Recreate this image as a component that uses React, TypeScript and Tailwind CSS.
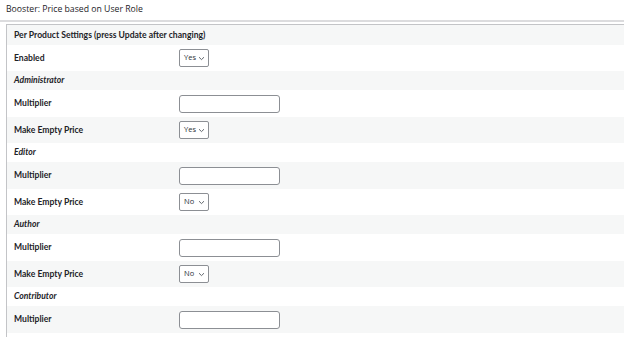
import React from "react";

const font = { fontFamily: '"Open Sans", "Noto Sans", sans-serif' };
const labelFont = { fontFamily: 'Lato, "Open Sans", sans-serif' };

function Select({ value }: { value: string }) {
  return (
    <div className="flex h-[18px] w-[30px] items-center justify-between rounded-[2px] border border-[#8c8f94] bg-white pl-[4px] pr-[3px] text-[7.5px] text-[#2c3338]">
      <span>{value}</span>
      <svg width="7" height="5" viewBox="0 0 7 5" fill="none">
        <path d="M1 1.2 L3.5 3.6 L6 1.2" stroke="#50575e" strokeWidth="0.9" />
      </svg>
    </div>
  );
}

function Input() {
  return <div className="h-[18px] w-[101px] rounded-[3px] border border-[#8c8f94] bg-white" />;
}

function Row({
  label,
  h,
  gray,
  italic,
  children,
}: {
  label: string;
  h: string;
  gray?: boolean;
  italic?: boolean;
  children?: React.ReactNode;
}) {
  return (
    <div className={`flex items-center ${h} ${gray ? "bg-[#f6f7f7]" : "bg-white"}`}>
      <div
        style={labelFont}
        className={`w-[172px] shrink-0 whitespace-nowrap pl-[7px] text-[8.6px] font-bold text-[#1d2327] ${italic ? "italic" : ""}`}
      >
        {label}
      </div>
      {children}
    </div>
  );
}

export default function App() {
  return (
    <div className="h-[337px] w-[624px] overflow-hidden bg-white" style={font}>
      <div className="flex h-[20px] items-center whitespace-nowrap pl-[6px] text-[8.7px] text-[#1d2327]">
        Booster: Price based on User Role
      </div>
      <div className="h-[2px] bg-[#dcdcde]" />
      <div className="h-[2px]" />
      <div className="ml-[6px] border-l border-t border-[#c3c4c7]">
        <Row label="Per Product Settings (press Update after changing)" h="h-[20px]" gray />
        <Row label="Enabled" h="h-[26px]">
          <Select value="Yes" />
        </Row>
        <Row label="Administrator" h="h-[19px]" gray italic />
        <Row label="Multiplier" h="h-[27px]">
          <Input />
        </Row>
        <Row label="Make Empty Price" h="h-[26px]" gray>
          <Select value="Yes" />
        </Row>
        <Row label="Editor" h="h-[19px]" italic />
        <Row label="Multiplier" h="h-[27px]" gray>
          <Input />
        </Row>
        <Row label="Make Empty Price" h="h-[26px]">
          <Select value="No" />
        </Row>
        <Row label="Author" h="h-[19px]" gray italic />
        <Row label="Multiplier" h="h-[27px]">
          <Input />
        </Row>
        <Row label="Make Empty Price" h="h-[26px]" gray>
          <Select value="No" />
        </Row>
        <Row label="Contributor" h="h-[19px]" italic />
        <Row label="Multiplier" h="h-[27px]" gray>
          <Input />
        </Row>
        <Row label="" h="h-[10px]" />
      </div>
    </div>
  );
}
